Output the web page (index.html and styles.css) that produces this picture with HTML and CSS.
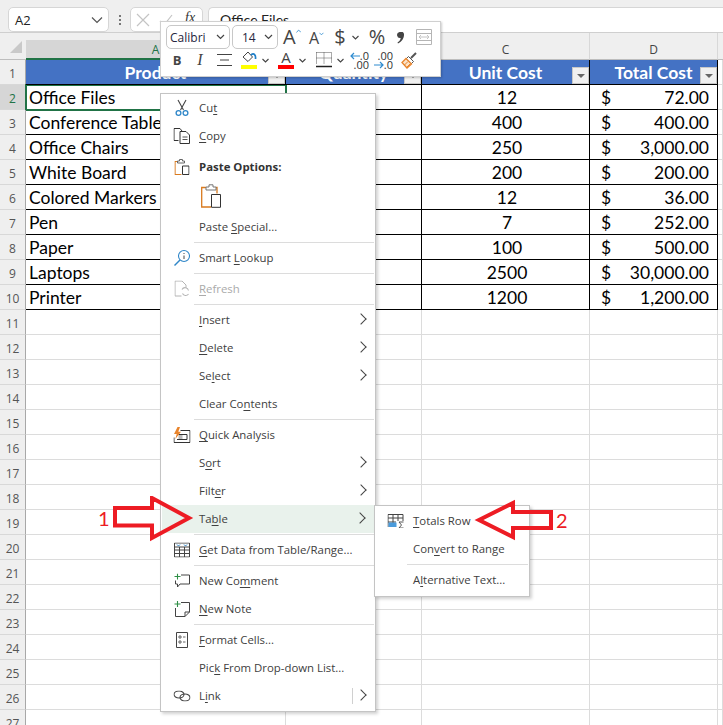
FILE: index.html
```html
<!DOCTYPE html>
<html lang="en">
<head>
    <meta charset="UTF-8">
    <meta name="viewport" content="width=device-width, initial-scale=1.0">
    <title>Excel Table Context Menu</title>
    <link rel="stylesheet" href="styles.css">
</head>
<body>

    <!-- Formula bar -->
    <div class="formula-bar">
        <div class="name-box"><span>A2</span>
            <svg class="chev" width="12" height="8" viewBox="0 0 12 8"><path d="M1 1.5l5 5 5-5" fill="none" stroke="#555" stroke-width="1.2"/></svg>
        </div>
        <div class="dots"><i></i><i></i><i></i></div>
        <div class="fx-box">
            <svg width="14" height="14" viewBox="0 0 14 14"><path d="M1 1l12 12M13 1L1 13" stroke="#c4c4c4" stroke-width="1.2"/></svg>
            <svg width="14" height="14" viewBox="0 0 14 14"><path d="M1 8l4 4 8-10" fill="none" stroke="#c4c4c4" stroke-width="1.2"/></svg>
            <span class="fx">fx</span>
        </div>
        <div class="formula-input">Office Files</div>
    </div>

    <!-- Sheet -->
    <div class="sheet">
        <div class="corner"><svg width="12" height="12" viewBox="0 0 12 12"><path d="M12 0v12H0z" fill="#c9c9c9"/></svg></div>
        <div class="col-head picked">A</div><div class="col-head">B</div><div class="col-head">C</div><div class="col-head">D</div><div class="col-head tail"></div>

        <div class="row-head">1</div>
        <div class="title">Product<b class="filter"></b></div><div class="title">Quantity<b class="filter"></b></div><div class="title">Unit Cost<b class="filter"></b></div><div class="title">Total Cost<b class="filter"></b></div><div class="cell"></div>

        <div class="row-head picked">2</div>
        <div class="data active">Office Files</div><div class="data"></div><div class="data mid">12</div><div class="data money"><span>$</span><span>72.00</span></div><div class="cell"></div>
        <div class="row-head">3</div>
        <div class="data">Conference Table</div><div class="data"></div><div class="data mid">400</div><div class="data money"><span>$</span><span>400.00</span></div><div class="cell"></div>
        <div class="row-head">4</div>
        <div class="data">Office Chairs</div><div class="data"></div><div class="data mid">250</div><div class="data money"><span>$</span><span>3,000.00</span></div><div class="cell"></div>
        <div class="row-head">5</div>
        <div class="data">White Board</div><div class="data"></div><div class="data mid">200</div><div class="data money"><span>$</span><span>200.00</span></div><div class="cell"></div>
        <div class="row-head">6</div>
        <div class="data">Colored Markers</div><div class="data"></div><div class="data mid">12</div><div class="data money"><span>$</span><span>36.00</span></div><div class="cell"></div>
        <div class="row-head">7</div>
        <div class="data">Pen</div><div class="data"></div><div class="data mid">7</div><div class="data money"><span>$</span><span>252.00</span></div><div class="cell"></div>
        <div class="row-head">8</div>
        <div class="data">Paper</div><div class="data"></div><div class="data mid">100</div><div class="data money"><span>$</span><span>500.00</span></div><div class="cell"></div>
        <div class="row-head">9</div>
        <div class="data">Laptops</div><div class="data"></div><div class="data mid">2500</div><div class="data money"><span>$</span><span>30,000.00</span></div><div class="cell"></div>
        <div class="row-head">10</div>
        <div class="data">Printer</div><div class="data"></div><div class="data mid">1200</div><div class="data money"><span>$</span><span>1,200.00</span></div><div class="cell"></div>

        <div class="row-head">11</div><div class="cell"></div><div class="cell"></div><div class="cell"></div><div class="cell"></div><div class="cell"></div>
        <div class="row-head">12</div><div class="cell"></div><div class="cell"></div><div class="cell"></div><div class="cell"></div><div class="cell"></div>
        <div class="row-head">13</div><div class="cell"></div><div class="cell"></div><div class="cell"></div><div class="cell"></div><div class="cell"></div>
        <div class="row-head">14</div><div class="cell"></div><div class="cell"></div><div class="cell"></div><div class="cell"></div><div class="cell"></div>
        <div class="row-head">15</div><div class="cell"></div><div class="cell"></div><div class="cell"></div><div class="cell"></div><div class="cell"></div>
        <div class="row-head">16</div><div class="cell"></div><div class="cell"></div><div class="cell"></div><div class="cell"></div><div class="cell"></div>
        <div class="row-head">17</div><div class="cell"></div><div class="cell"></div><div class="cell"></div><div class="cell"></div><div class="cell"></div>
        <div class="row-head">18</div><div class="cell"></div><div class="cell"></div><div class="cell"></div><div class="cell"></div><div class="cell"></div>
        <div class="row-head">19</div><div class="cell"></div><div class="cell"></div><div class="cell"></div><div class="cell"></div><div class="cell"></div>
        <div class="row-head">20</div><div class="cell"></div><div class="cell"></div><div class="cell"></div><div class="cell"></div><div class="cell"></div>
        <div class="row-head">21</div><div class="cell"></div><div class="cell"></div><div class="cell"></div><div class="cell"></div><div class="cell"></div>
        <div class="row-head">22</div><div class="cell"></div><div class="cell"></div><div class="cell"></div><div class="cell"></div><div class="cell"></div>
        <div class="row-head">23</div><div class="cell"></div><div class="cell"></div><div class="cell"></div><div class="cell"></div><div class="cell"></div>
        <div class="row-head">24</div><div class="cell"></div><div class="cell"></div><div class="cell"></div><div class="cell"></div><div class="cell"></div>
        <div class="row-head">25</div><div class="cell"></div><div class="cell"></div><div class="cell"></div><div class="cell"></div><div class="cell"></div>
        <div class="row-head">26</div><div class="cell"></div><div class="cell"></div><div class="cell"></div><div class="cell"></div><div class="cell"></div>
        <div class="row-head">27</div><div class="cell"></div><div class="cell"></div><div class="cell"></div><div class="cell"></div><div class="cell"></div>
    </div>

    <!-- Mini toolbar -->
    <div class="mini-bar">
        <div class="mini-row">
            <div class="select font-select">Calibri<svg width="9" height="6" viewBox="0 0 9 6"><path d="M1 1l3.5 3.5L8 1" fill="none" stroke="#444" stroke-width="1.2"/></svg></div>
            <div class="select size-select">14<svg width="9" height="6" viewBox="0 0 9 6"><path d="M1 1l3.5 3.5L8 1" fill="none" stroke="#444" stroke-width="1.2"/></svg></div>
            <div class="tool grow-a">A<svg width="6" height="4" viewBox="0 0 6 4"><path d="M.5 3.5L3 1l2.5 2.5" fill="none" stroke="#2e8bd0"/></svg></div>
            <div class="tool shrink-a">A<svg width="6" height="4" viewBox="0 0 6 4"><path d="M.5.5L3 3 5.500.5" fill="none" stroke="#2e8bd0"/></svg></div>
            <div class="tool dollar">$</div>
            <svg class="tiny" width="7" height="5" viewBox="0 0 7 5"><path d="M.5 1l3 3 3-3" fill="none" stroke="#444" stroke-width="1.1"/></svg>
            <div class="tool percent">%</div>
            <svg class="comma" width="8" height="12" viewBox="0 0 8 12"><path d="M2.500 0a3 3 0 0 1 4.500 3c0 3.500-2.500 7-6 8.500l-.5-1c2-1.200 3-2.700 3.200-4.500A3 3 0 0 1 2.500 0z" fill="#444"/></svg>
            <svg class="wrap-icon" width="16" height="16" viewBox="0 0 16 16"><path d="M.5 .5h15v15H.5zM.5 4.500h15M.5 11.500h15" fill="none" stroke="#b5b5b5"/><path d="M3 8h10M5 6L3 8l2 2M11 6l2 2-2 2" fill="none" stroke="#c4c4c4"/></svg>
        </div>
        <div class="mini-row low">
            <div class="tool bold">B</div>
            <div class="tool italic">I</div>
            <svg class="center-lines" width="15" height="14" viewBox="0 0 15 14"><path d="M0 1.500h15M3 7h9M0 12.500h15" stroke="#444" stroke-width="1"/></svg>
            <div class="color-btn fill-btn">
                <svg width="16" height="13" viewBox="0 0 16 13"><path d="M2 6l5-5 4.500 5-4.500 4.500z" fill="#fff" stroke="#444"/><path d="M10 4c3-2.500 5 0 4.500 4" fill="none" stroke="#1f7fc9" stroke-width="1.700"/></svg>
                <i class="swatch yellow"></i>
            </div>
            <svg class="tiny" width="7" height="5" viewBox="0 0 7 5"><path d="M.5 1l3 3 3-3" fill="none" stroke="#444" stroke-width="1.1"/></svg>
            <div class="color-btn text-btn">
                <span>A</span>
                <i class="swatch red"></i>
            </div>
            <svg class="tiny" width="7" height="5" viewBox="0 0 7 5"><path d="M.5 1l3 3 3-3" fill="none" stroke="#444" stroke-width="1.1"/></svg>
            <svg class="border-icon" width="16" height="16" viewBox="0 0 16 16"><path d="M.5 .5h15v11M.5 .5v11M.5 6h15M8 .5v11" fill="none" stroke="#555" stroke-dasharray="1 1"/><path d="M0 14.500h16" stroke="#222" stroke-width="1.500"/></svg>
            <svg class="tiny" width="7" height="5" viewBox="0 0 7 5"><path d="M.5 1l3 3 3-3" fill="none" stroke="#444" stroke-width="1.1"/></svg>
            <div class="decimal"><span class="dec-top"><svg width="10" height="8" viewBox="0 0 10 8"><path d="M10 4H1M4 1L1 4l3 3" fill="none" stroke="#2e8bd0" stroke-width="1.200"/></svg>.0</span><span>.00</span></div>
            <div class="decimal flip"><span>.00</span><span class="dec-top"><svg width="10" height="8" viewBox="0 0 10 8"><path d="M0 4h9M6 1l3 3-3 3" fill="none" stroke="#2e8bd0" stroke-width="1.200"/></svg>.0</span></div>
            <svg class="brush" width="17" height="17" viewBox="0 0 17 17"><path d="M10 6l5-5" stroke="#555" stroke-width="2"/><path d="M7.500 4.500l5 5-2.500 2.500-5-5z" fill="#fff" stroke="#555"/><path d="M5 6.500l5.500 5.500L6 16 1 10.500z" fill="#fbe3c8" stroke="#e8842c" stroke-width="1.300"/><path d="M3.500 13L7 9.500M6 15l3-3" stroke="#e8842c"/></svg>
        </div>
    </div>

    <!-- Context menu -->
    <div class="menu main-menu">
        <div class="item">
            <svg class="icon" width="16" height="18" viewBox="0 0 16 18"><path d="M4 1l5.500 10M12 1L6.500 11" fill="none" stroke="#444" stroke-width="1.100"/><circle cx="4.500" cy="14" r="2.400" fill="none" stroke="#2e86c8" stroke-width="1.300"/><circle cx="11.500" cy="14" r="2.400" fill="none" stroke="#2e86c8" stroke-width="1.300"/></svg>
            <span>Cu<u>t</u></span>
        </div>
        <div class="item">
            <svg class="icon" width="17" height="16" viewBox="0 0 17 16"><path d="M5 12.500H.5v-12h6l2 2.500" fill="none" stroke="#333"/><path d="M6.500 3.500h6l3.500 3.500v8.500H6.500z" fill="#fff" stroke="#333"/><path d="M9 9h5M9 11.500h5" stroke="#555"/></svg>
            <span><u>C</u>opy</span>
        </div>
        <div class="item tall strong">
            <svg class="icon" width="15" height="16" viewBox="0 0 15 16"><path d="M3 2.500H.5v13H7" fill="none" stroke="#d97a1e" stroke-width="1.200"/><path d="M3 4V2h2V.5h3V2h2v2z" fill="#fff" stroke="#666"/><path d="M8 7h6.500v8.500H8z" fill="#fff" stroke="#333"/></svg>
            <span>Paste Options:</span>
        </div>
        <div class="item tall paste-row">
            <svg width="20" height="24" viewBox="0 0 20 24"><path d="M5 3.500H.7v19.500H10" fill="none" stroke="#d97a1e" stroke-width="1.300"/><path d="M15 3.500h1v6" fill="none" stroke="#d97a1e" stroke-width="1.300"/><path d="M5 6V3h3V.8h4V3h3v3z" fill="#fff" stroke="#777"/><path d="M10.500 10.500h9v12.800h-9z" fill="#fff" stroke="#333"/></svg>
        </div>
        <div class="item"><span>Paste <u>S</u>pecial...</span></div>
        <div class="sep"></div>
        <div class="item">
            <svg class="icon" width="17" height="17" viewBox="0 0 17 17"><circle cx="10.500" cy="6.500" r="5.500" fill="none" stroke="#2e86c8" stroke-width="1.100"/><path d="M6.500 10.500L1 16" stroke="#2e86c8" stroke-width="1.500"/><path d="M10.500 3.500v1M10.500 6v3.500" stroke="#444"/></svg>
            <span>Smart <u>L</u>ookup</span>
        </div>
        <div class="sep"></div>
        <div class="item off">
            <svg class="icon" width="15" height="17" viewBox="0 0 15 17"><path d="M7 15.500H.5V.5h7l4 4v3" fill="none" stroke="#b4b4b4"/><path d="M14 10a3.500 3.500 0 0 0-6.500-1M8 13a3.500 3.500 0 0 0 6 .5" fill="none" stroke="#b4b4b4" stroke-width="1.100"/></svg>
            <span><u>R</u>efresh</span>
        </div>
        <div class="sep"></div>
        <div class="item more"><span><u>I</u>nsert</span></div>
        <div class="item more"><span><u>D</u>elete</span></div>
        <div class="item more"><span>Se<u>l</u>ect</span></div>
        <div class="item"><span>Clear Co<u>n</u>tents</span></div>
        <div class="sep"></div>
        <div class="item">
            <svg class="icon" width="17" height="16" viewBox="0 0 17 16"><path d="M7 3.500h9.500v12H.5v-5" fill="none" stroke="#333"/><path d="M5 7.500h8.500v5H3.500" fill="none" stroke="#333"/><path d="M5 8h4v4H5z" fill="#bbb"/><path d="M4 0L.5 7h2.700L1.800 12 7.500 4.800H4.800L6.500 0z" fill="#e8842c"/></svg>
            <span><u>Q</u>uick Analysis</span>
        </div>
        <div class="item more"><span>S<u>o</u>rt</span></div>
        <div class="item more"><span>Filt<u>e</u>r</span></div>
        <div class="item more hot"><span>Ta<u>b</u>le</span></div>
        <div class="sep"></div>
        <div class="item">
            <svg class="icon" width="16" height="15" viewBox="0 0 16 15"><path d="M.5 .5h15v14H.5zM.5 4.500h15M.5 7.500h15M.5 11h15M5.500 4.500v10M10.500 4.500v10" fill="none" stroke="#444"/><path d="M3 2l1.500 1.500L6 2M10 2l1.500 1.500L13 2" fill="none" stroke="#2e86c8"/></svg>
            <span><u>G</u>et Data from Table/Range...</span>
        </div>
        <div class="sep"></div>
        <div class="item">
            <svg class="icon" width="16" height="15" viewBox="0 0 16 15"><path d="M7 1.500h8.500v9H6L3.500 13.500v-3H1.500V7" fill="none" stroke="#444"/><path d="M3.500 0v6M.5 3h6" stroke="#2f8f46" stroke-width="1.100"/></svg>
            <span>New Co<u>m</u>ment</span>
        </div>
        <div class="item">
            <svg class="icon" width="16" height="16" viewBox="0 0 16 16"><path d="M7 1.500h8.500V11L11 15.500H1.500V7" fill="none" stroke="#444"/><path d="M11 15.500V11h4.500" fill="none" stroke="#444"/><path d="M3.500 0v6M.5 3h6" stroke="#2f8f46" stroke-width="1.100"/></svg>
            <span><u>N</u>ew Note</span>
        </div>
        <div class="sep"></div>
        <div class="item">
            <svg class="icon" width="12" height="16" viewBox="0 0 12 16"><path d="M.5 .5h11v15H.5z" fill="none" stroke="#444"/><path d="M3 4h2v2H3zM3 9h2v2H3z" fill="none" stroke="#666"/><path d="M7 5h2.500M7 10h2.500" stroke="#666"/></svg>
            <span><u>F</u>ormat Cells...</span>
        </div>
        <div class="item"><span>Pic<u>k</u> From Drop-down List...</span></div>
        <div class="item more split">
            <svg class="icon" width="17" height="11" viewBox="0 0 17 11"><ellipse cx="5.500" cy="4" rx="5" ry="3.500" fill="none" stroke="#444" stroke-width="1.100"/><ellipse cx="11.500" cy="7" rx="5" ry="3.500" fill="none" stroke="#444" stroke-width="1.100"/></svg>
            <span>L<u>i</u>nk</span>
        </div>
    </div>

    <!-- Table submenu -->
    <div class="menu sub-menu">
        <div class="item">
            <svg class="icon" width="17" height="14" viewBox="0 0 17 14"><path d="M.5 .5h15M.5 .5V13M.5 4h15M.5 8h8M5.500 .5V13M10.500 .5V7M15.500 .5V7" fill="none" stroke="#444"/><path d="M1 8.500h8V13H1z" fill="#4a9bdc"/><path d="M16 8h-4.500l2.500 3-2.500 3H16" fill="none" stroke="#444" stroke-width=".9"/></svg>
            <span><u>T</u>otals Row</span>
        </div>
        <div class="item"><span>Con<u>v</u>ert to Range</span></div>
        <div class="sep"></div>
        <div class="item"><span>A<u>l</u>ternative Text...</span></div>
    </div>

    <!-- Callouts -->
    <span class="step step-one">1</span>
    <span class="step step-two">2</span>
    <svg class="arrow arrow-one" width="84" height="48" viewBox="0 0 84 48"><path d="M2 12h37V2l37 20-37 20V29.500H2z" fill="none" stroke="#ed1c24" stroke-width="4"/></svg>
    <svg class="arrow arrow-two" width="84" height="48" viewBox="0 0 84 48"><path d="M78 13H40V4L6 21l34 17v-9h38z" fill="none" stroke="#ed1c24" stroke-width="4"/></svg>

</body>
</html>
```
FILE: styles.css
```css
* {
    margin: 0;
    padding: 0;
    box-sizing: border-box;
}

body {
    width: 723px;
    height: 725px;
    overflow: hidden;
    position: relative;
    background-color: #fff;
    font-family: 'Open Sans', sans-serif;
    color: #333;
}

/* Formula bar */
.formula-bar {
    height: 33px;
    background-color: #efefef;
    display: flex;
    align-items: flex-end;
    border-bottom: 1px solid #cfcfcf;
}

.name-box {
    width: 101px;
    height: 25px;
    margin: 0 0 0 8px;
    background-color: #fff;
    border: 1px solid #d6d6d6;
    border-radius: 5px;
    display: flex;
    justify-content: space-between;
    align-items: center;
    padding: 0 5px 0 6px;
    font-size: 13px;
    color: #222;
}

.dots {
    width: 21px;
    height: 25px;
    display: flex;
    flex-direction: column;
    justify-content: center;
    align-items: center;
    gap: 2px;
}

.dots i {
    width: 2px;
    height: 2px;
    background-color: #777;
}

.fx-box {
    width: 73px;
    height: 25px;
    background-color: #fff;
    border: 1px solid #d6d6d6;
    border-radius: 5px;
    display: flex;
    align-items: center;
    gap: 9px;
    padding-left: 5px;
}

.fx {
    margin: -3px 0 0 3px;
    font-family: 'Liberation Serif', serif;
    font-style: italic;
    font-size: 14px;
    line-height: 14px;
    color: #333;
}

.formula-input {
    flex: 1;
    height: 25px;
    margin-left: 5px;
    background-color: #fff;
    border: 1px solid #d6d6d6;
    border-right: none;
    border-bottom: none;
    border-radius: 5px 0 0 0;
    padding: 3px 0 0 11px;
    font-family: 'Lato', sans-serif;
    font-size: 14px;
    color: #222;
}

/* Sheet grid */
.sheet {
    display: grid;
    grid-template-columns: 26px 260px 136px 168px 128px 5px;
    grid-template-rows: 27px repeat(27, 25px);
    background-color: #fff;
    font-family: 'Lato', sans-serif;
}

.corner,
.col-head {
    background-color: #efefef;
    border-bottom: 1px solid #bdbdbd;
}

.corner {
    padding: 8px 0 0 10px;
    line-height: 0;
}

.col-head {
    position: relative;
    padding-top: 7px;
    text-align: center;
    font-family: 'Open Sans', sans-serif;
    font-size: 12px;
    line-height: 19px;
    color: #444;
    border-right: 1px solid #d8d8d8;
    background-clip: padding-box;
}

.col-head.picked {
    background: linear-gradient(#efefef 7px, #d6d6d6 7px);
    color: #217346;
    border-bottom: 2px solid #217346;
}

.col-head.tail {
    border-right: none;
}

.row-head {
    background-color: #efefef;
    border-right: 1px solid #a8a8a8;
    border-bottom: 1px solid #d8d8d8;
    text-align: center;
    font-family: 'Open Sans', sans-serif;
    font-size: 12px;
    line-height: 28px;
    color: #555;
}

.row-head.picked {
    background-color: #d6d6d6;
    color: #217346;
}

.cell {
    border-right: 1px solid #dcdcdc;
    border-bottom: 1px solid #dcdcdc;
}

.title {
    position: relative;
    background-color: #4472c4;
    border-right: 1px solid #000;
    border-bottom: 1px solid #000;
    color: #fff;
    font-weight: 700;
    font-size: 17.5px;
    line-height: 25px;
    text-align: center;
}

.filter {
    position: absolute;
    right: 0;
    bottom: 0;
    width: 17px;
    height: 17px;
    background-color: #f0f0f0;
    border: 1px solid #c8c8c8;
}

.filter::after {
    content: '';
    position: absolute;
    left: 4px;
    top: 6px;
    border-left: 4px solid transparent;
    border-right: 4px solid transparent;
    border-top: 4px solid #666;
}

.data {
    border-right: 1px solid #000;
    border-bottom: 1px solid #000;
    padding-left: 3px;
    font-size: 17.5px;
    line-height: 25px;
    color: #000;
    white-space: nowrap;
}

.data.active {
    outline: 2px solid #217346;
    outline-offset: -1px;
}

.data.mid {
    text-align: center;
}

.data.money {
    display: flex;
    justify-content: space-between;
    padding: 0 8px 0 11px;
}

/* Mini toolbar */
.mini-bar {
    position: absolute;
    left: 160px;
    top: 21px;
    width: 281px;
    height: 56px;
    background-color: #fff;
    border: 1px solid #d0d0d0;
    box-shadow: 1px 1px 2px rgba(0, 0, 0, 0.2);
    padding: 3px 0 0 5px;
}

.mini-row {
    display: flex;
    align-items: center;
    height: 24px;
}

.mini-row.low {
    margin-top: -1px;
}

.select {
    height: 24px;
    border: 1px solid #c8c8c8;
    border-radius: 5px;
    display: flex;
    align-items: center;
    justify-content: space-between;
    padding: 0 4px 0 3px;
    font-size: 12px;
    color: #262640;
}

.font-select {
    width: 64px;
}

.size-select {
    width: 46px;
    margin-left: 2px;
    padding-left: 9px;
}

.tool {
    font-size: 18px;
    line-height: 1;
    color: #444;
    display: flex;
    justify-content: center;
}

.grow-a {
    width: 18px;
    margin-left: 5px;
    font-size: 20px;
    font-weight: 400;
}

.grow-a svg,
.shrink-a svg {
    margin-top: 2px;
}

.shrink-a {
    width: 15px;
    margin-left: 8px;
    font-size: 16px;
    margin-top: 2px;
}

.dollar {
    width: 14px;
    margin-left: 9px;
    font-size: 20px;
}

.tiny {
    flex: none;
    margin-left: 5px;
}

.percent {
    width: 18px;
    margin-left: 9px;
    font-size: 20px;
}

.comma {
    margin: 2px 0 0 11px;
}

.wrap-icon {
    margin-left: 11px;
}

.bold,
.italic {
    width: 12px;
    font-family: 'Liberation Serif', serif;
    font-size: 15px;
}

.bold {
    margin-left: 5px;
    font-family: 'Open Sans', sans-serif;
    font-size: 13px;
    font-weight: 700;
}

.italic {
    margin-left: 11px;
    font-style: italic;
    font-size: 16px;
}

.center-lines {
    margin-left: 11px;
}

.color-btn {
    width: 16px;
    display: flex;
    flex-direction: column;
    align-items: center;
}

.fill-btn {
    margin-left: 9px;
}

.text-btn {
    margin-left: 9px;
    font-size: 15px;
    line-height: 13px;
    color: #444;
}

.swatch {
    display: block;
    width: 16px;
    height: 4px;
    margin-top: 1px;
}

.yellow {
    background-color: #ffff00;
}

.red {
    background-color: #ff0000;
}

.border-icon {
    margin-left: 10px;
}

.decimal {
    width: 16px;
    margin-left: 9px;
    font-size: 11px;
    line-height: 9px;
    color: #333;
    display: flex;
    flex-direction: column;
    align-items: flex-end;
}

.decimal + .decimal {
    margin-left: 8px;
}

.dec-top {
    display: flex;
    align-items: center;
}

.brush {
    margin-left: 8px;
}

/* Context menus */
.menu {
    position: absolute;
    background-color: #fff;
    border: 1px solid #c4c4c4;
    box-shadow: 2px 2px 3px rgba(0, 0, 0, 0.18);
    font-size: 11.4px;
    color: #404040;
}

.main-menu {
    left: 160px;
    top: 93px;
    width: 216px;
    height: 619px;
}

.sub-menu {
    left: 374px;
    top: 505px;
    width: 156px;
    height: 92px;
    padding-top: 1px;
}

.item {
    position: relative;
    height: 28px;
    padding: 0 0 2px 38px;
    display: flex;
    align-items: center;
}

.item u {
    text-underline-offset: 2px;
}

.item.tall {
    height: 30px;
}

.item.strong {
    margin-top: 2px;
    font-weight: 700;
    color: #333;
}

.item.paste-row {
    padding-left: 40px;
    margin-bottom: 1px;
}

.item.off {
    color: #aaa;
}

.item.hot {
    background-color: #e9f2ec;
    margin: 0 1px;
    padding-left: 37px;
}

.icon {
    position: absolute;
    left: 21px;
    top: 50%;
    transform: translate(-50%, -50%);
}

.more::after {
    content: '';
    position: absolute;
    right: 10px;
    top: 9px;
    width: 7px;
    height: 7px;
    border-top: 1px solid #444;
    border-right: 1px solid #444;
    transform: rotate(45deg);
}

.split::before {
    content: '';
    position: absolute;
    right: 22px;
    top: 6px;
    height: 16px;
    border-left: 1px solid #d0d0d0;
}

.sep {
    height: 3px;
    margin: 1px 1px -1px 33px;
    border-top: 1px solid #dcdcdc;
}

.sub-menu .sep {
    margin-left: 32px;
}

/* Callouts */
.step {
    position: absolute;
    font-family: 'Lato', sans-serif;
    font-size: 20px;
    color: #ed1c24;
}

.step-one {
    left: 98px;
    top: 506px;
}

.step-two {
    left: 556px;
    top: 508px;
}

.arrow {
    position: absolute;
}

.arrow-one {
    left: 113px;
    top: 496px;
}

.arrow-two {
    left: 473px;
    top: 499px;
}
```
